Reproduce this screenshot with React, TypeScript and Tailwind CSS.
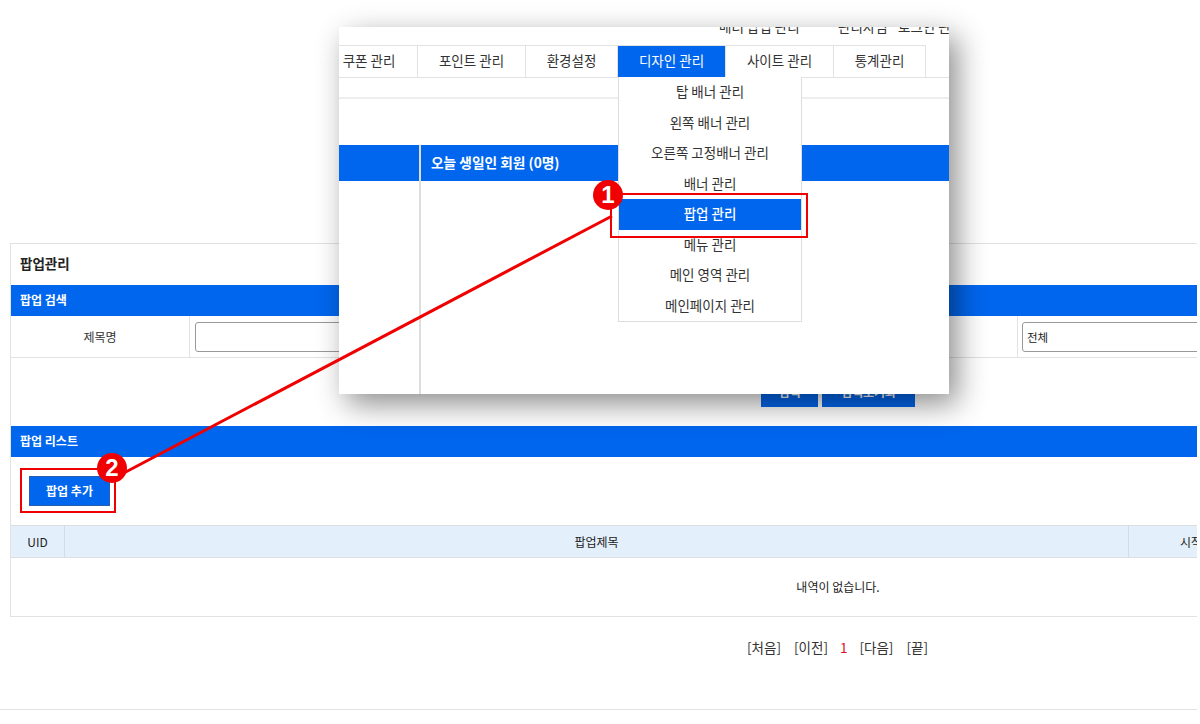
import React from 'react';

const tabs = [
  { label: '쿠폰 관리', width: 'w-[97px]' },
  { label: '포인트 관리', width: 'w-[108px]' },
  { label: '환경설정', width: 'w-[92px]' },
  { label: '디자인 관리', width: 'w-[108px]', active: true },
  { label: '사이트 관리', width: 'w-[108px]' },
  { label: '통계관리', width: 'w-[92px]' },
];

const menuItems = [
  '탑 배너 관리',
  '왼쪽 배너 관리',
  '오른쪽 고정배너 관리',
  '배너 관리',
  '팝업 관리',
  '메뉴 관리',
  '메인 영역 관리',
  '메인페이지 관리',
];

const SectionBar = ({ title }: { title: string }) => (
  <div className="h-[31px] bg-[#0066ee] pl-[9px] pb-[1px] flex items-center text-[12px] font-bold text-white">
    {title}
  </div>
);

const Badge = ({ n, className }: { n: number; className: string }) => (
  <div
    className={`absolute w-[30px] h-[30px] rounded-full bg-[#f00000] flex items-center justify-center text-white text-[24px] font-bold leading-none font-['Liberation_Sans',sans-serif] ${className}`}
  >
    {n}
  </div>
);

const MenuShot = () => (
  <div className="absolute left-[339px] top-[27px] w-[610px] h-[367px] bg-white shadow-[8px_10px_28px_rgba(0,0,0,0.45)] overflow-hidden">
    <div className="h-[7px] overflow-hidden flex pl-[380px] text-[13.5px] leading-none text-[#333] whitespace-nowrap">
      <span className="-mt-[7px] w-[119px] shrink-0">배너 팝업 관리</span>
      <span className="-mt-[7px] w-[60px] shrink-0">관리자님</span>
      <span className="-mt-[7px] shrink-0">로그인 관리</span>
    </div>

    <div className="flex h-[33px] mt-[11px] -ml-[18px] border-b border-[#e2e2e2]">
      {tabs.map(t => (
        <div
          key={t.label}
          className={`${t.width} pb-[2px] flex items-center justify-center text-[13.5px] border-r border-t border-[#e2e2e2] ${
            t.active ? 'bg-[#0066ee] text-white' : 'text-[#333]'
          }`}
        >
          {t.label}
        </div>
      ))}
    </div>

    <div className="h-[21px] border-b-2 border-[#eeeeee]" />

    <div className="flex mt-[46px] h-[250px]">
      <div className="w-[82px] border-r-2 border-[#dddddd]">
        <div className="h-[36px] bg-[#0066ee]" />
      </div>
      <div className="flex-1">
        <div className="h-[36px] bg-[#0066ee] pl-[10px] pb-[1px] flex items-center text-[13.7px] font-bold text-white">
          오늘 생일인 회원 (0명)
        </div>
      </div>
    </div>

    <div className="absolute left-[279px] top-[50px] w-[184px] h-[245px] bg-white border border-t-0 border-[#dddddd] flex flex-col">
      {menuItems.map(item => (
        <div
          key={item}
          className={`flex-1 pb-[2px] flex items-center justify-center text-[13.5px] ${
            item === '팝업 관리' ? 'bg-[#0066ee] text-white font-medium' : 'text-[#333]'
          }`}
        >
          {item}
        </div>
      ))}
    </div>
  </div>
);

const Annotations = () => (
  <>
    <svg className="absolute left-0 top-0" width="1200" height="724" fill="none">
      <line x1="612" y1="216" x2="120" y2="475" stroke="#f00000" strokeWidth="3" />
    </svg>
    <div className="absolute left-[610px] top-[193px] w-[198px] h-[45px] border-2 border-[#f00000]" />
    <div className="absolute left-[20px] top-[468px] w-[96px] h-[45px] border-2 border-[#f00000]" />
    <Badge n={1} className="left-[593px] top-[180px]" />
    <Badge n={2} className="left-[97px] top-[453px]" />
  </>
);

export default function App() {
  return (
    <div className="relative w-[1200px] h-[724px] bg-white overflow-hidden font-['Noto_Sans_CJK_KR','Noto_Sans',sans-serif] text-[#333]">
      <div className="w-[1197px] h-[710px] overflow-hidden border-b border-[#e2e2e2] pt-[243px] pl-[10px]">
        <div className="w-[1656px] border border-[#e2e2e2]">
          <div className="h-[41px] pl-[9px] pb-[3px] flex items-center text-[13.5px] font-bold text-[#222]">팝업관리</div>

          <SectionBar title="팝업 검색" />
          <div className="grid grid-cols-[179px_649px_179px_1fr] h-[42px] border-b border-[#e2e2e2] text-[12px]">
            <div className="flex items-center justify-center border-r border-[#e2e2e2]">제목명</div>
            <div className="flex items-center px-[5px]">
              <input className="w-full h-[30px] border border-[#999999] rounded-[3px] bg-white" />
            </div>
            <div className="flex items-center justify-center border-r border-[#e2e2e2]" />
            <div className="flex items-center px-[4px]">
              <select className="w-full h-[30px] border border-[#999999] rounded-[3px] bg-white text-[11.5px] text-[#222]">
                <option>전체</option>
              </select>
            </div>
          </div>

          <div className="h-[68px] pt-[19px] flex justify-center gap-[4px]">
            <button className="w-[57px] h-[30px] bg-[#0066ee] text-white text-[12px] font-bold">검색</button>
            <button className="w-[93px] h-[30px] bg-[#0066ee] text-white text-[12px] font-bold">검색초기화</button>
          </div>

          <SectionBar title="팝업 리스트" />
          <div className="h-[68px] pl-[18px] pt-[19px]">
            <button className="w-[81px] h-[30px] bg-[#0066ee] border border-[#2a5fb0] text-white text-[12px] font-bold">
              팝업 추가
            </button>
          </div>

          <div className="grid grid-cols-[54px_1064px_1fr] h-[33px] bg-[#e3f0fb] border-y border-[#dcdfe2] text-[12px] text-[#222]">
            <div className="flex items-center justify-center border-r border-[#d3dde6]">UID</div>
            <div className="flex items-center justify-center border-r border-[#d3dde6]">팝업제목</div>
            <div className="pl-[51px] flex items-center">시작일</div>
          </div>
          <div className="h-[58px] flex items-center justify-center text-[12px] text-[#222]">내역이 없습니다.</div>
        </div>

        <div className="w-[1655px] mt-[20px] flex justify-center gap-[13px] text-[13.5px] text-[#333]">
          <span>[처음]</span>
          <span>[이전]</span>
          <span className="text-[#e0102a] -mx-[1px]">1</span>
          <span>[다음]</span>
          <span>[끝]</span>
        </div>
      </div>

      <MenuShot />
      <Annotations />
    </div>
  );
}
